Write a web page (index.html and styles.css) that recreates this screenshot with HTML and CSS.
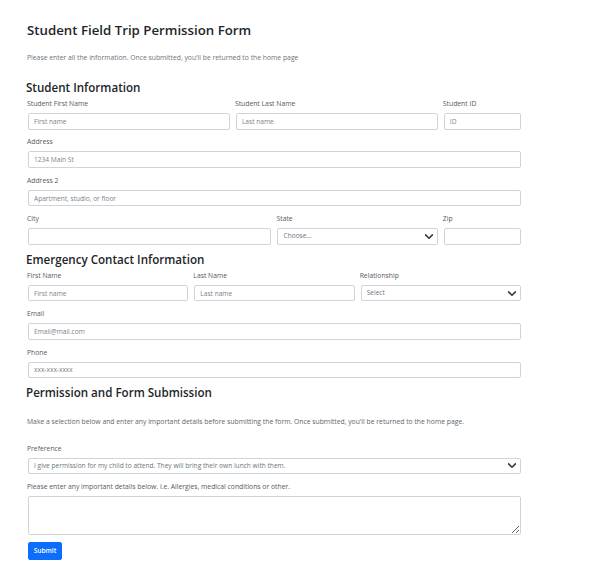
FILE: index.html
```html
<!DOCTYPE html>
<html lang="en">
<head>
<meta charset="utf-8">
<title>Student Field Trip Permission Form</title>
<link rel="stylesheet" href="styles.css">
</head>
<body>
<main class="page">
  <h1 class="title">Student Field Trip Permission Form</h1>
  <p class="intro">Please enter all the information. Once submitted, you'll be returned to the home page</p>

  <form class="form">
    <h2 class="section section-student">Student Information</h2>
    <div class="grid">
      <div class="field span-5">
        <label class="label">Student First Name</label>
        <input class="control" type="text" placeholder="First name">
      </div>
      <div class="field span-5">
        <label class="label">Student Last Name</label>
        <input class="control" type="text" placeholder="Last name">
      </div>
      <div class="field span-2">
        <label class="label">Student ID</label>
        <input class="control" type="text" placeholder="ID">
      </div>
      <div class="field span-12">
        <label class="label">Address</label>
        <input class="control" type="text" placeholder="1234 Main St">
      </div>
      <div class="field span-12">
        <label class="label">Address 2</label>
        <input class="control" type="text" placeholder="Apartment, studio, or floor">
      </div>
      <div class="field span-6">
        <label class="label">City</label>
        <input class="control" type="text">
      </div>
      <div class="field span-4">
        <label class="label">State</label>
        <div class="select-wrap">
          <select class="control select"><option>Choose...</option></select>
          <svg class="chevron" viewBox="1 3.5 14 9" aria-hidden="true"><path d="M2 5l6 6 6-6"/></svg>
        </div>
      </div>
      <div class="field span-2">
        <label class="label">Zip</label>
        <input class="control" type="text">
      </div>
    </div>

    <h2 class="section section-emergency">Emergency Contact Information</h2>
    <div class="grid">
      <div class="field span-4">
        <label class="label">First Name</label>
        <input class="control" type="text" placeholder="First name">
      </div>
      <div class="field span-4">
        <label class="label">Last Name</label>
        <input class="control" type="text" placeholder="Last name">
      </div>
      <div class="field span-4">
        <label class="label">Relationship</label>
        <div class="select-wrap">
          <select class="control select"><option>Select</option></select>
          <svg class="chevron" viewBox="1 3.5 14 9" aria-hidden="true"><path d="M2 5l6 6 6-6"/></svg>
        </div>
      </div>
      <div class="field span-12">
        <label class="label">Email</label>
        <input class="control" type="email" placeholder="Email@mail.com">
      </div>
      <div class="field span-12">
        <label class="label">Phone</label>
        <input class="control" type="tel" placeholder="xxx-xxx-xxxx">
      </div>
    </div>

    <h2 class="section section-permission">Permission and Form Submission</h2>
    <p class="note">Make a selection below and enter any important details before submitting the form. Once submitted, you'll be returned to the home page.</p>
    <div class="grid grid-permission">
      <div class="field span-12">
        <label class="label">Preference</label>
        <div class="select-wrap">
          <select class="control select"><option>I give permission for my child to attend. They will bring their own lunch with them.</option></select>
          <svg class="chevron" viewBox="1 3.5 14 9" aria-hidden="true"><path d="M2 5l6 6 6-6"/></svg>
        </div>
      </div>
      <div class="field span-12">
        <label class="label">Please enter any important details below. i.e. Allergies, medical conditions or other.</label>
        <textarea class="control textarea"></textarea>
      </div>
    </div>
    <button class="submit" type="button">Submit</button>
  </form>
</main>
</body>
</html>
```

FILE: styles.css
```css
* {
  box-sizing: border-box;
}

body {
  margin: 0;
  background: #ffffff;
  color: #212529;
  font-family: "Open Sans", "Noto Sans", "Liberation Sans", sans-serif;
}

.page {
  width: 597px;
  padding: 22px 0 0 27px;
}

.title {
  margin: 0;
  font-size: 13.25px;
  line-height: 16px;
  font-weight: 600;
  color: #212529;
}

.intro {
  margin: 15px 0 0;
  font-size: 6.8px;
  line-height: 10px;
  color: #6c757d;
}

.form {
  margin: 0;
}

.section {
  margin: 0 0 0 -1px;
  font-size: 11.6px;
  line-height: 16px;
  font-weight: 600;
  color: #212529;
}

.section-student {
  margin-top: 17px;
}

.section-emergency {
  margin-top: 7.2px;
}

.section-permission {
  margin-top: 6.5px;
}

.grid {
  display: grid;
  grid-template-columns: repeat(12, 1fr);
  column-gap: 6px;
  row-gap: 7.8px;
  width: 494px;
  padding-left: 1px;
  margin-top: 3.2px;
}

.grid-permission {
  margin-top: 16.6px;
}

.span-2 { grid-column: span 2; }
.span-4 { grid-column: span 4; }
.span-5 { grid-column: span 5; }
.span-6 { grid-column: span 6; }
.span-12 { grid-column: span 12; }

.field {
  display: flex;
  flex-direction: column;
  min-width: 0;
}

.label {
  display: block;
  margin: 0 0 4px -1px;
  font-size: 6.8px;
  line-height: 10px;
  color: #555b61;
  white-space: nowrap;
}

.control {
  display: block;
  width: 100%;
  height: 16.5px;
  margin: 0;
  padding: 0 5px;
  border: 1px solid #ced4da;
  border-radius: 2px;
  background: #ffffff;
  font-family: inherit;
  font-size: 6.6px;
  line-height: 10px;
  color: #6c757d;
  outline: none;
}

.control::placeholder {
  color: #7b838a;
  opacity: 1;
}

.select-wrap {
  position: relative;
}

.select {
  appearance: none;
  -webkit-appearance: none;
  padding-right: 16px;
  color: #6c757d;
}

.chevron {
  position: absolute;
  right: 5px;
  top: 5.6px;
  width: 8px;
  height: 5.2px;
  fill: none;
  stroke: #343a40;
  stroke-width: 2.8;
  stroke-linecap: round;
  stroke-linejoin: round;
  pointer-events: none;
}

.note {
  margin: 16.5px 0 0;
  font-size: 6.8px;
  line-height: 10px;
  color: #5f666d;
}

.textarea {
  height: 39px;
  padding: 3px 5px;
  resize: vertical;
}

.submit {
  display: block;
  margin: 6.6px 0 0 1px;
  width: 34px;
  height: 18px;
  padding: 0;
  border: 1px solid #0d6efd;
  border-radius: 2px;
  background: #0d6efd;
  color: #ffffff;
  font-family: inherit;
  font-size: 6.6px;
  font-weight: 600;
  line-height: 10px;
  cursor: pointer;
}
```
